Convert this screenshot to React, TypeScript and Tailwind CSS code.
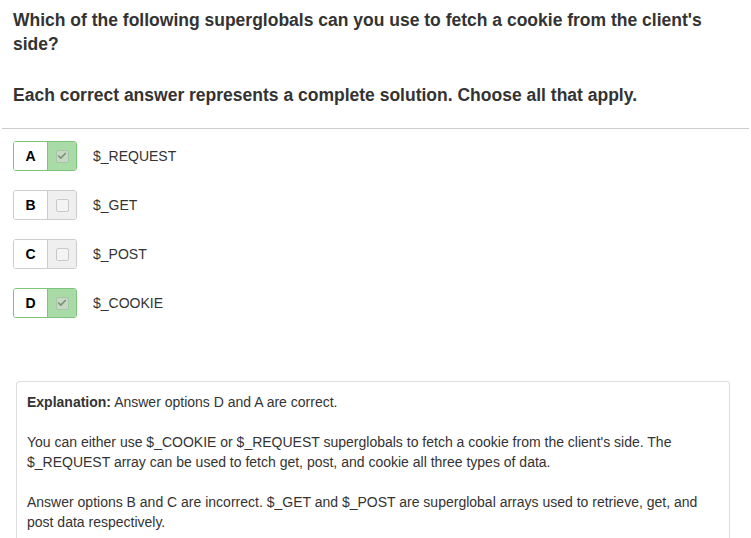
import { Check } from "lucide-react";

const OPTIONS = [
  { letter: "A", label: "$_REQUEST", checked: true },
  { letter: "B", label: "$_GET", checked: false },
  { letter: "C", label: "$_POST", checked: false },
  { letter: "D", label: "$_COOKIE", checked: true },
];

function OptionRow({ letter, label, checked }: { letter: string; label: string; checked: boolean }) {
  return (
    <div className="flex h-[30px] items-center">
      <div
        className={`flex h-[30px] w-[64px] overflow-hidden rounded-[3px] border ${
          checked ? "border-[#7cc47a]" : "border-[#cccccc]"
        }`}
      >
        <div className="flex w-[33px] items-center justify-center bg-white text-[14px] font-bold text-black">
          {letter}
        </div>
        <div
          className={`flex flex-1 items-center justify-center border-l ${
            checked ? "border-[#7cc47a] bg-[#a8dba5]" : "border-[#cccccc] bg-[#efefef]"
          }`}
        >
          <span
            className={`flex h-[13px] w-[13px] items-center justify-center rounded-[2px] border ${
              checked ? "border-[#a9c3a6] bg-[#c4d9c1]" : "border-[#c9c9c9] bg-[#f4f4f4]"
            }`}
          >
            {checked && <Check size={10} strokeWidth={4} className="text-[#7f8f7d]" />}
          </span>
        </div>
      </div>
      <span className="ml-[16px] text-[14px] text-[#333333]">{label}</span>
    </div>
  );
}

export default function App() {
  return (
    <div className="min-h-[538px] bg-white font-['Liberation_Sans',Arial,sans-serif] text-[#333333]">
      <div className="px-[13px] pt-[8px]">
        <h1 className="text-[17.5px] font-bold leading-[24px] text-[#333333]">
          Which of the following superglobals can you use to fetch a cookie from the client's side?
        </h1>
        <p className="mt-[27px] text-[17.5px] font-bold leading-[24px]">
          Each correct answer represents a complete solution. Choose all that apply.
        </p>
      </div>
      <div className="mx-[2px] mt-[21px] border-t border-[#cccccc]" />
      <div className="flex flex-col gap-[19px] pl-[13px] pt-[12px]">
        {OPTIONS.map((o) => (
          <OptionRow key={o.letter} {...o} />
        ))}
      </div>
      <div className="ml-[16px] mt-[63px] w-[714px] rounded-t-[4px] border border-b-0 border-[#dddddd] px-[10px] pb-[12px] pt-[10px] text-[14px] leading-[20px] text-[#333333]">
        <p>
          <span className="font-bold">Explanation:</span> Answer options D and A are correct.
        </p>
        <p className="mt-[20px]">
          You can either use $_COOKIE or $_REQUEST superglobals to fetch a cookie from the client's side. The
          $_REQUEST array can be used to fetch get, post, and cookie all three types of data.
        </p>
        <p className="mt-[20px]">
          Answer options B and C are incorrect. $_GET and $_POST are superglobal arrays used to retrieve, get, and
          post data respectively.
        </p>
      </div>
    </div>
  );
}
